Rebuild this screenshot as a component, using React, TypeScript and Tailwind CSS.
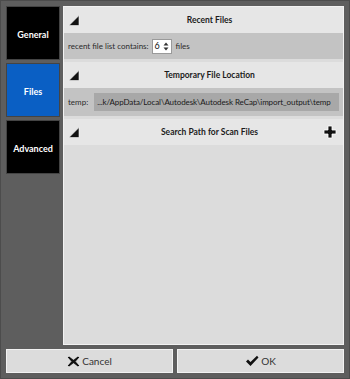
import React from 'react';

const font = { fontFamily: 'Lato, "Open Sans", Arial, sans-serif' };

const Corner = () => (
  <svg width="12" height="11" viewBox="0 0 12 11" className="shrink-0">
    <polygon points="11,0.5 11,10.5 1,10.5" fill="#111" stroke="#fafafa" strokeWidth="0.6" />
  </svg>
);

const SectionHeader = ({ title, action }: { title: string; action?: React.ReactNode }) => (
  <div className="relative flex items-center h-[26px] bg-[#e6e6e6] px-[4px]">
    <Corner />
    <div className="flex-1 text-center text-[8.5px] font-bold text-[#1c1c1c]">{title}</div>
    {action && <div className="absolute right-[6px] top-[6px]">{action}</div>}
  </div>
);

const PlusIcon = () => (
  <svg width="14" height="14" viewBox="0 0 14 14">
    <path d="M5 1h4v4h4v4H9v4H5V9H1V5h4z" fill="#111" stroke="#fff" strokeWidth="0.8" />
  </svg>
);

const CrossIcon = () => (
  <svg width="13" height="13" viewBox="0 0 13 13">
    <path d="M2 1l4.5 3.5L11 1l1.5 1.5L9 6.5l3.5 4-1.5 1.5L6.5 8.5 2 12 0.5 10.5 4 6.5 0.5 2.5z" fill="#111" stroke="#fff" strokeWidth="0.6" />
  </svg>
);

const CheckIcon = () => (
  <svg width="14" height="12" viewBox="0 0 14 12">
    <path d="M1 6.5l2-2 2.5 2.5L12 0.8l1.5 1.7L5.5 11z" fill="#111" />
  </svg>
);

const Tile = ({ label, active }: { label: string; active?: boolean }) => (
  <div
    className={`w-[54px] h-[54px] flex items-center justify-center pt-[3px] border border-[#444] text-[9px] font-bold text-white ${
      active ? 'bg-[#0a5fc4]' : 'bg-black'
    }`}
  >
    {label}
  </div>
);

export default function App() {
  return (
    <div
      style={font}
      className="w-[350px] h-[379px] bg-[#5e5e5e] border border-[#4c4c4c] p-[5px] flex flex-col gap-[4px] overflow-hidden"
    >
      <div className="flex gap-[3px] h-[339px]">
        <div className="flex flex-col gap-[3px] shrink-0">
          <Tile label="General" />
          <Tile label="Files" active />
          <Tile label="Advanced" />
        </div>
        <div className="flex-1 min-w-0 bg-[#dcdcdc] border border-[#f2f2f2] flex flex-col overflow-hidden">
          {/* Recent files */}
          <SectionHeader title="Recent Files" />
          <div className="h-[26px] bg-[#c3c3c3] flex items-center px-[4px] text-[8px] text-[#2b2b2b]">
            <span>recent file list contains:</span>
            <div className="ml-[3px] w-[20px] h-[15px] bg-white border border-[#9a9a9a] flex items-center justify-between px-[2px]">
              <span className="text-[9px] text-[#111]">6</span>
              <svg width="6" height="9" viewBox="0 0 6 9">
                <polygon points="3,0.5 5.5,3.5 0.5,3.5" fill="#333" />
                <polygon points="3,8.5 5.5,5.5 0.5,5.5" fill="#333" />
              </svg>
            </div>
            <span className="ml-[4px]">files</span>
          </div>
          <div className="h-[3px]" />
          {/* Temporary file location */}
          <SectionHeader title="Temporary File Location" />
          <div className="h-[28px] bg-[#c3c3c3] flex items-center px-[4px] text-[8px] text-[#2b2b2b]">
            <span>temp:</span>
            <div className="ml-[6px] flex-1 min-w-0 h-[18px] bg-[#a8a8a8] flex items-center px-[3px] text-[#1a1a1a] whitespace-nowrap overflow-hidden tracking-[-0.1px]">
              ...k/AppData/Local\Autodesk\Autodesk ReCap\import_output\temp
            </div>
          </div>
          <div className="h-[3px]" />
          {/* Search path */}
          <SectionHeader title="Search Path for Scan Files" action={<PlusIcon />} />
        </div>
      </div>
      <div className="flex gap-[4px] h-[24px]">
        <button className="flex-1 flex items-center justify-center gap-[2px] bg-[#dcdcdc] border border-[#f2f2f2] text-[10px] text-[#333]">
          <CrossIcon />
          <span>Cancel</span>
        </button>
        <button className="flex-1 flex items-center justify-center gap-[2px] bg-[#dcdcdc] border border-[#f2f2f2] text-[10px] text-[#333]">
          <CheckIcon />
          <span>OK</span>
        </button>
      </div>
    </div>
  );
}
